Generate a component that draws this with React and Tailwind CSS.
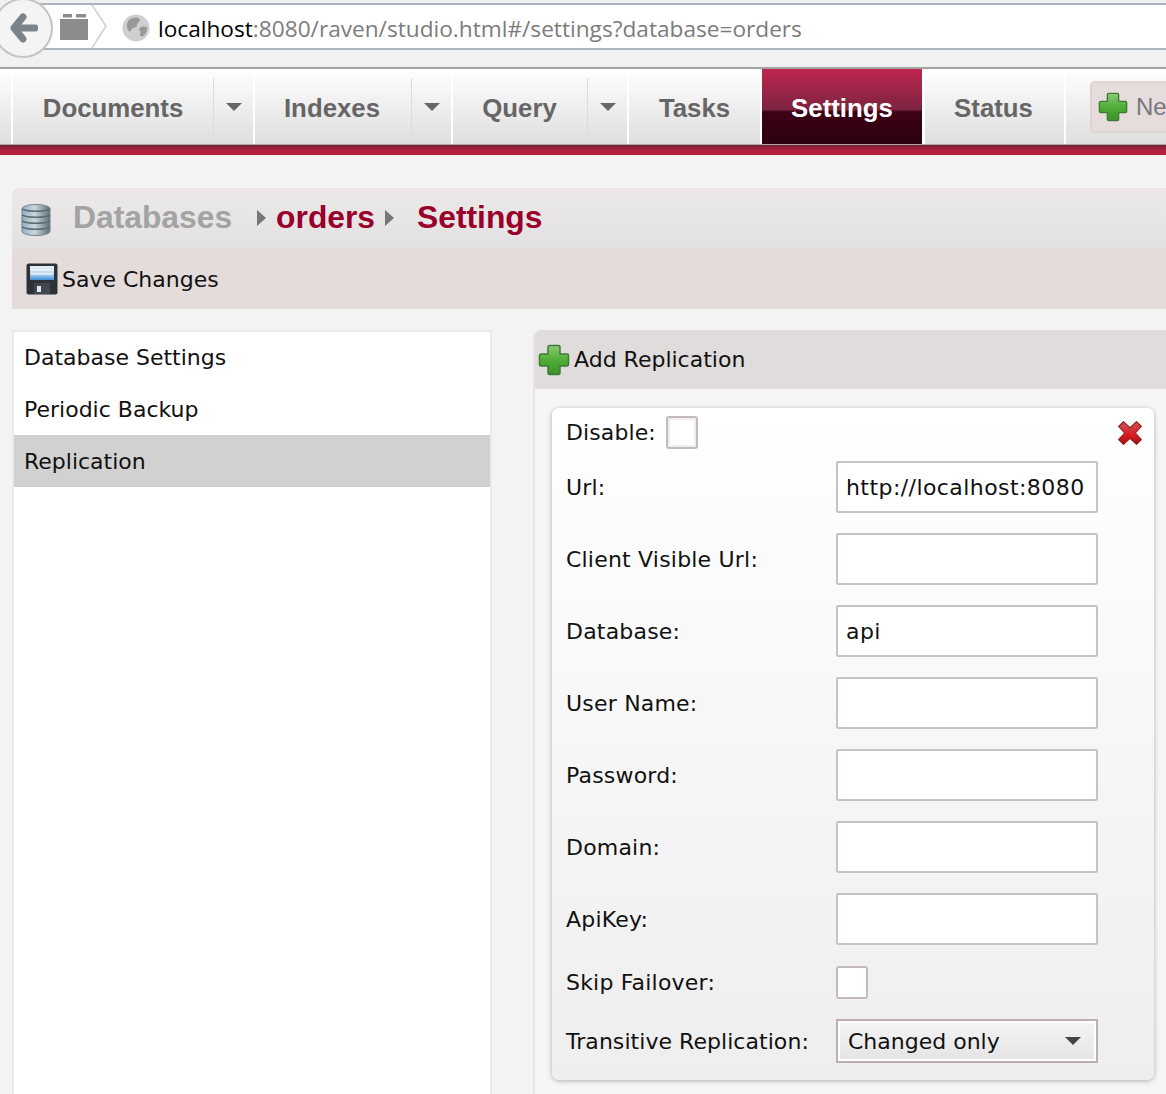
import React from 'react';

const PlusIcon = ({ className }) => (
  <svg className={className} viewBox="0 0 32 32">
    <defs>
      <linearGradient id="plusFill" x1="0" y1="0" x2="0" y2="1">
        <stop offset="0" stopColor="#8fc97a" />
        <stop offset="0.5" stopColor="#4fae35" />
        <stop offset="1" stopColor="#3d8f2a" />
      </linearGradient>
    </defs>
    <path
      d="M11.5 1.5h9a1.5 1.5 0 0 1 1.5 1.5v7h7a1.5 1.5 0 0 1 1.5 1.5v9a1.5 1.5 0 0 1-1.5 1.5h-7v7a1.5 1.5 0 0 1-1.5 1.5h-9a1.5 1.5 0 0 1-1.5-1.5v-7H3a1.5 1.5 0 0 1-1.5-1.5v-9A1.5 1.5 0 0 1 3 10h7V3a1.5 1.5 0 0 1 1.5-1.5z"
      fill="url(#plusFill)"
      stroke="#3f7a38"
      strokeWidth="1.5"
    />
  </svg>
);

const CloseIcon = () => (
  <svg className="w-[26px] h-[26px]" viewBox="0 0 24 24">
    <defs>
      <linearGradient id="closeFill" x1="0" y1="0" x2="0" y2="1">
        <stop offset="0" stopColor="#c8575b" />
        <stop offset="0.6" stopColor="#d81a1f" />
        <stop offset="1" stopColor="#a50f14" />
      </linearGradient>
    </defs>
    <path
      d="M6 1.500L12 7l6-5.500 4.500 4.500L17 12l5.500 6-4.500 4.500L12 17l-6 5.500L1.500 18 7 12 1.500 6z"
      fill="url(#closeFill)"
      stroke="#8f1a1d"
      strokeWidth="1"
      strokeLinejoin="round"
    />
  </svg>
);

const DatabaseIcon = () => (
  <svg className="w-[30px] h-8" viewBox="0 0 30 32">
    <defs>
      <linearGradient id="dbFill" x1="0" y1="0" x2="1" y2="0">
        <stop offset="0" stopColor="#8fb0c2" />
        <stop offset="0.45" stopColor="#c9d6dc" />
        <stop offset="1" stopColor="#5f6f78" />
      </linearGradient>
    </defs>
    <path d="M1 5c0-6 28-6 28 0v22c0 6-28 6-28 0z" fill="url(#dbFill)" stroke="#77838a" />
    <path d="M1 11c6 3 22 3 28 0M1 17c6 3 22 3 28 0M1 23c6 3 22 3 28 0M1 5c6 3 22 3 28 0" fill="none" stroke="#5d6b73" strokeWidth="1.500" />
  </svg>
);

const SaveIcon = () => (
  <svg className="w-8 h-8" viewBox="0 0 32 32">
    <defs>
      <linearGradient id="saveLabel" x1="0" y1="0" x2="0" y2="1">
        <stop offset="0" stopColor="#e8f1f8" />
        <stop offset="0.55" stopColor="#bcd7ee" />
        <stop offset="1" stopColor="#3d8fd6" />
      </linearGradient>
    </defs>
    <rect x="0.500" y="0.500" width="31" height="31" rx="2" fill="#2c3238" />
    <rect x="4" y="3" width="24" height="14" fill="url(#saveLabel)" />
    <path d="M5 7h22M5 11h22" stroke="#ffffff" strokeWidth="1" />
    <rect x="8" y="20" width="16" height="11" fill="#40474e" />
    <rect x="11" y="23" width="4" height="6" fill="#e6e6e6" />
  </svg>
);

const Caret = ({ className }) => (
  <span className={`block shrink-0 w-0 h-0 border-x-[8px] border-x-transparent border-t-[8px] ${className}`} />
);

const Crumb = ({ className }) => (
  <span className={`shrink-0 mb-1 w-0 h-0 border-y-[8.500px] border-y-transparent border-l-[9px] border-l-[#777777] ${className}`} />
);

const NavTab = ({ label, width, active, className = '' }) => (
  <div
    className={`h-full shrink-0 flex items-center justify-center pt-1 text-[25.800px] font-bold ${className} ${
      active
        ? 'text-white bg-[linear-gradient(to_bottom,#be2550_0%,#7d2440_54%,#3d0215_57%,#2b000f_100%)]'
        : 'text-[#666666]'
    }`}
    style={{ width }}
  >
    {label}
  </div>
);

const NavCaret = () => (
  <div className="h-full shrink-0 flex items-center">
    <div className="w-px h-[58px] bg-[#dcdcdc]" />
    <div className="w-[39px] flex justify-center">
      <Caret className="border-t-[#666666]" />
    </div>
  </div>
);

const Divider = () => <div className="w-0.5 h-full shrink-0 bg-white" />;

const FIELDS = [
  { label: 'Url:', value: 'http://localhost:8080' },
  { label: 'Client Visible Url:', value: '' },
  { label: 'Database:', value: 'api' },
  { label: 'User Name:', value: '' },
  { label: 'Password:', value: '' },
  { label: 'Domain:', value: '' },
  { label: 'ApiKey:', value: '' },
];

const Checkbox = ({ inner }) => (
  <div className={`w-8 h-[33px] rounded-[3px] border-2 border-[#c4babc] bg-white ${inner ? 'shadow-[inset_0_0_0_2px_#eeeeee]' : ''}`} />
);

const App = () => {
  return (
    <div className="w-[1166px] h-[1094px] overflow-hidden bg-[#f4f3f3] font-['DejaVu_Sans',sans-serif] text-[22px] text-[#111111]">
      {/* Browser toolbar */}
      <div className="relative h-[69px] pt-[3px] bg-[#f1f1f1] border-b-2 border-[#a3a3a3]">
        <div className="relative h-[47px] ml-10 flex items-center border-y-2 border-[#adb3bd] bg-white">
          <svg className="ml-5 w-7 h-[26px]" viewBox="0 0 28 26">
            <path d="M3 0h9v3.500H3zM16 0h10v3.500H16z" fill="#8c8c8c" />
            <rect x="0" y="5" width="28" height="21" fill="#8c8c8c" />
          </svg>
          <svg className="ml-[3px] w-4 h-[43px]" viewBox="0 0 16 43">
            <path d="M1 0l14 21L1 43" fill="none" stroke="#d0d0d0" strokeWidth="1.500" />
          </svg>
          <svg className="ml-[15px] w-7 h-7 mt-0.5" viewBox="0 0 30 30">
            <circle cx="15" cy="15" r="14.500" fill="#cfcfcf" />
            <path d="M8 6c4-3 10-3 11 0 1 3-3 3-3 6s-5 2-6 5-3 2-4-1c-1-3-1-7 2-10zM19 15c3-2 7-2 8 0 0 4-3 9-6 9-3-1-1-4-1-5s-3-2-1-4z" fill="#989898" />
          </svg>
          <div className="ml-2 pt-[5px] font-['Open_Sans',sans-serif] text-[22.650px] text-[#7c7c7c] whitespace-nowrap">
            <span className="text-black">localhost</span>:8080/raven/studio.html#/settings?database=orders
          </div>
        </div>
        {/* back button sits over the address bar */}
        <div className="absolute left-[-7px] top-[-2px] w-[60px] h-[60px] rounded-full bg-[#f4f4f4] border-2 border-[#c4c4c4] flex items-center justify-center">
          <svg className="ml-[2px] w-7 h-[30px]" viewBox="0 0 28 30">
            <path d="M13 4L4 15l9 11M5 15h20" fill="none" stroke="#7d8489" strokeWidth="7" strokeLinejoin="round" strokeLinecap="round" />
          </svg>
        </div>
      </div>

      {/* Main nav */}
      <div className="h-[76px] flex font-['Liberation_Sans',sans-serif] bg-[linear-gradient(to_bottom,#ffffff,#dedede)] border-b border-[#aaaaaa]">
        <div className="w-[11px] shrink-0" />
        <Divider />
        <NavTab label="Documents" width={200} />
        <NavCaret />
        <Divider />
        <NavTab label="Indexes" width={156} className="pr-0.5" />
        <NavCaret />
        <Divider />
        <NavTab label="Query" width={134} className="pr-px" />
        <NavCaret />
        <Divider />
        <NavTab label="Tasks" width={131} />
        <Divider />
        <NavTab label="Settings" width={160} active />
        <div className="w-[3px] h-full shrink-0 bg-white" />
        <NavTab label="Status" width={139} className="pr-0.5" />
        <Divider />
        <div className="ml-[24px] mt-3 h-[52px] w-[120px] shrink-0 flex items-center pl-[6px] gap-2 rounded-[5px] border-2 border-[#dfd2d2] bg-[#e6dcdc] text-[24px] text-[#77777f]">
          <PlusIcon className="w-[30px] h-[30px] shrink-0" />
          New
        </div>
      </div>
      <div className="h-[10px] bg-[linear-gradient(to_bottom,#7c1f3a,#b3203f_60%,#b3203f)]" />

      {/* Breadcrumbs */}
      <div className="mt-[33px] ml-3 h-[61px] rounded-tl-[8px] flex items-center bg-[linear-gradient(to_bottom,#ece8e8,#e2e1e2)] border-t-2 border-[#eee3e3] font-['Liberation_Sans',sans-serif] text-[31.800px] font-bold text-[#99002b]">
        <div className="ml-[9px]"><DatabaseIcon /></div>
        <span className="ml-[22px] pb-1 text-[#a3a3a3]">Databases</span>
        <Crumb className="ml-[25px]" />
        <span className="ml-[10px] pb-1">orders</span>
        <Crumb className="ml-[10px]" />
        <span className="ml-[23px] pb-1">Settings</span>
      </div>
      <div className="ml-3 h-[60px] flex items-center pl-[14px] bg-[#e3dcdb]">
        <SaveIcon />
        <span className="ml-[4px]">Save Changes</span>
      </div>

      <div className="mt-[21px] flex h-[764px]">
        {/* Side menu */}
        <div className="ml-3 w-[480px] bg-white border-2 border-b-0 border-[#ece9e7]">
          <div className="h-[51px] flex items-center pl-[10px]">Database Settings</div>
          <div className="h-[52px] flex items-center pl-[10px] pt-px">Periodic Backup</div>
          <div className="h-[52px] flex items-center pl-[10px] pt-px bg-[#d1d1d1]">Replication</div>
        </div>

        {/* Replication panel */}
        <div className="ml-[41px] flex-1 border-l-2 border-[#e8e4e4] rounded-tl-[8px] bg-[#f7f6f6]">
          <div className="h-[59px] flex items-center pl-[3px] bg-[#e0dcdc] rounded-tl-[6px]">
            <PlusIcon className="w-8 h-8" />
            <span className="ml-[4px]">Add Replication</span>
          </div>
          <div className="mt-[19px] ml-[17px] w-[602px] h-[672px] pl-[14px] rounded-[7px] shadow-[0_1px_5px_rgba(90,80,80,0.45)] bg-[linear-gradient(to_bottom,#ffffff,#eeeeee)]">
            <div className="relative h-[53px] pt-2 flex items-start">
              <span className="h-[33px] flex items-center tracking-[0.1px]">Disable:</span>
              <div className="ml-[10px]"><Checkbox inner /></div>
              <div className="absolute right-[11px] top-3"><CloseIcon /></div>
            </div>
            <div className="flex flex-col gap-5">
              {FIELDS.map((field) => (
                <div key={field.label} className="flex items-center h-[52px]">
                  <span className="w-[270px] shrink-0 pt-px tracking-[0.2px]">{field.label}</span>
                  <div className="w-[262px] h-[52px] flex items-center px-2 pt-px tracking-[0.43px] bg-white border-2 border-[#c8c2c3] rounded-[2px]">
                    {field.value}
                  </div>
                </div>
              ))}
              <div className="flex items-center h-[34px]">
                <span className="w-[270px] shrink-0 pt-px tracking-[0.2px]">Skip Failover:</span>
                <Checkbox />
              </div>
              <div className="flex items-center h-[44px]">
                <span className="w-[270px] shrink-0 tracking-[0.05px]">Transitive Replication:</span>
                <div className="w-[262px] h-[44px] flex items-center justify-between pl-[10px] pr-[15px] border-2 border-[#bcaeb1] shadow-[inset_0_0_0_2px_#ffffff] bg-[linear-gradient(to_bottom,#f5f5f5,#e4e4e4)]">
                  Changed only
                  <Caret className="border-t-[#444444]" />
                </div>
              </div>
            </div>
          </div>
        </div>
      </div>
    </div>
  );
};

export default App;
